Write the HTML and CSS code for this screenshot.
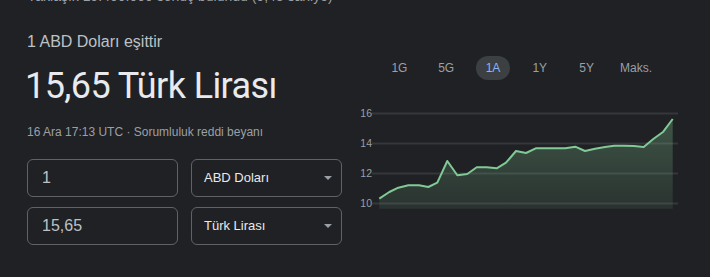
FILE: index.html
```html
<!DOCTYPE html>
<html lang="tr">
<head>
    <meta charset="UTF-8">
    <meta name="viewport" content="width=device-width, initial-scale=1.0">
    <title>ABD Doları - Türk Lirası</title>
    <link rel="stylesheet" href="styles.css">
</head>
<body>
    <div class="stats">Yaklaşık 19.400.000 sonuç bulundu (0,43 saniye)</div>

    <div class="converter">
        <div class="left">
            <div class="eq">1 ABD Doları eşittir</div>
            <div class="result">15,65 Türk Lirası</div>
            <div class="meta">16 Ara 17:13 UTC · <span class="link">Sorumluluk reddi beyanı</span></div>

            <div class="fields">
                <div class="field">1</div>
                <div class="field select">ABD Doları <span class="arrow"></span></div>
                <div class="field">15,65</div>
                <div class="field select">Türk Lirası <span class="arrow"></span></div>
            </div>
        </div>

        <div class="right">
            <div class="tabs">
                <div class="tab"><span>1G</span></div>
                <div class="tab"><span>5G</span></div>
                <div class="tab"><span class="active">1A</span></div>
                <div class="tab"><span>1Y</span></div>
                <div class="tab"><span>5Y</span></div>
                <div class="tab"><span>Maks.</span></div>
            </div>

            <svg class="chart" width="338" height="115" viewBox="0 0 338 115">
                <defs>
                    <linearGradient id="fill" x1="0" y1="15" x2="0" y2="109" gradientUnits="userSpaceOnUse">
                        <stop offset="0" stop-color="#81c995" stop-opacity="0.32"/>
                        <stop offset="1" stop-color="#81c995" stop-opacity="0.1"/>
                    </linearGradient>
                </defs>
                <!-- grid -->
                <g stroke="#35373b" stroke-width="2">
                    <line x1="20" y1="13.5" x2="326" y2="13.5"/>
                    <line x1="20" y1="43.5" x2="326" y2="43.5"/>
                    <line x1="20" y1="73.5" x2="326" y2="73.5"/>
                    <line x1="20" y1="103.5" x2="326" y2="103.5"/>
                </g>
                <g class="axis" text-anchor="end">
                    <text x="20" y="17">16</text>
                    <text x="20" y="47">14</text>
                    <text x="20" y="77">12</text>
                    <text x="20" y="107">10</text>
                </g>
                <polygon fill="url(#fill)" points="27.3,108.7 27.3,98.7 37.3,92 46.3,87.7 56.3,85.3 67,85.3 76.3,87 85.3,82.7 95.3,61 105.3,75.3 115.3,74 124.7,67.3 134.7,67.3 144.7,68.3 154,62.7 164,51 174,53 183.7,48.3 193.7,48.3 203.7,48.3 213.3,48.3 223.3,46.7 233,51 243,48.7 253,47 262.3,45.7 272,45.7 282,46 291.7,47 301.3,39 311.3,31.7 320.7,19 320.7,108.7"/>
                <polyline fill="none" stroke="#81c995" stroke-width="2" stroke-linejoin="round" points="27.3,98.7 37.3,92 46.3,87.7 56.3,85.3 67,85.3 76.3,87 85.3,82.7 95.3,61 105.3,75.3 115.3,74 124.7,67.3 134.7,67.3 144.7,68.3 154,62.7 164,51 174,53 183.7,48.3 193.7,48.3 203.7,48.3 213.3,48.3 223.3,46.7 233,51 243,48.7 253,47 262.3,45.7 272,45.7 282,46 291.7,47 301.3,39 311.3,31.7 320.7,19"/>
            </svg>
        </div>
    </div>
</body>
</html>
```

FILE: styles.css
```css
body {
    margin: 0;
    background: #202124;
    color: #bdc1c6;
    font-family: "Liberation Sans", Arial, sans-serif;
    overflow: hidden;
}

.stats {
    margin-top: -14px;
    padding-left: 27px;
    height: 20px;
    font-size: 14px;
    line-height: 20px;
    color: #9aa0a6;
    white-space: nowrap;
}

.converter {
    display: flex;
    align-items: flex-start;
}

.left {
    width: 315px;
    padding-left: 27px;
}

.eq {
    margin-top: 24px;
    font-size: 16px;
    line-height: 24px;
    color: #bdc1c6;
}

.result {
    margin-top: 10px;
    margin-left: -2px;
    font-family: Roboto, "Liberation Sans", sans-serif;
    font-size: 36px;
    line-height: 44px;
    letter-spacing: -0.6px;
    color: #e8eaed;
}

.meta {
    margin-top: 16px;
    font-size: 12px;
    line-height: 16px;
    color: #9aa0a6;
}

.fields {
    margin-top: 19px;
    display: grid;
    grid-template-columns: 151px 151px;
    column-gap: 13px;
    row-gap: 10px;
}

.field {
    height: 38px;
    box-sizing: border-box;
    border: 1px solid #5f6368;
    border-radius: 6px;
    padding-left: 14px;
    font-size: 16px;
    line-height: 36px;
    color: #bdc1c6;
}

.select {
    display: flex;
    align-items: center;
    justify-content: space-between;
    padding-left: 12px;
    padding-right: 9px;
    font-size: 13px;
    color: #e8eaed;
}

.arrow {
    width: 0;
    height: 0;
    border-left: 4.5px solid transparent;
    border-right: 4.5px solid transparent;
    border-top: 4.5px solid #9aa0a6;
}

.right {
    margin-left: 10px;
}

.tabs {
    margin-top: 50px;
    margin-left: 24px;
    width: 286px;
    display: grid;
    grid-template-columns: repeat(6, 1fr);
}

.tab {
    text-align: center;
}

.tab span {
    display: inline-block;
    height: 24px;
    line-height: 24px;
    padding: 0 10px;
    border-radius: 12px;
    font-size: 12px;
    color: #9aa0a6;
}

.tab .active {
    background: #3c4043;
    color: #8ab4f8;
}

.chart {
    display: block;
    margin-top: 20px;
}

.axis text {
    font-family: "Liberation Sans", Arial, sans-serif;
    font-size: 10.5px;
    fill: #9aa0a6;
}
```
